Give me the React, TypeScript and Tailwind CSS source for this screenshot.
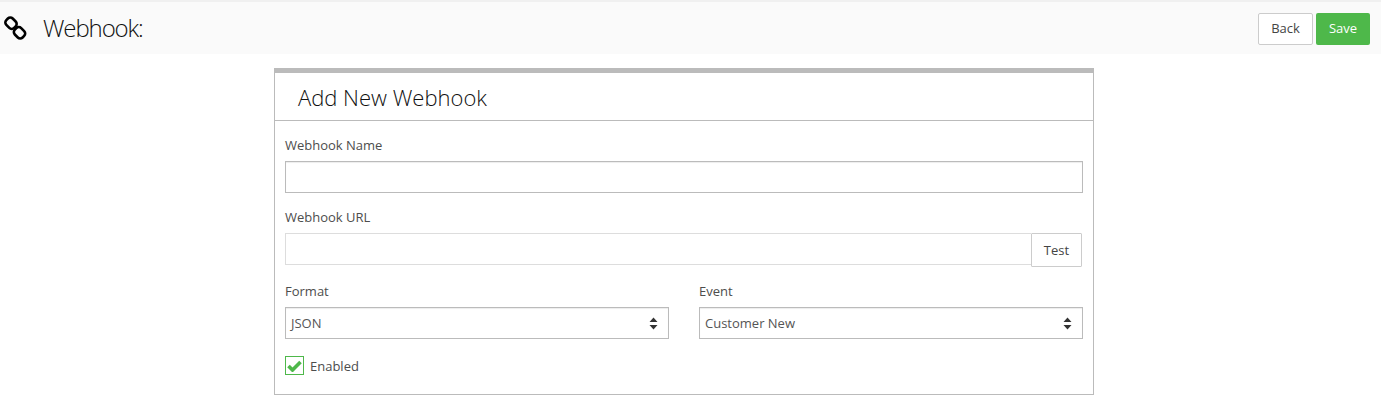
import React from "react";

function Link() {
  return (
    <svg width="24" height="24" viewBox="0 0 24 24" fill="none" className="ml-[3px] shrink-0">
      <g stroke="#000" strokeWidth="2.6">
        <rect x="3.5" y="1.7" width="9" height="11" rx="3.4" transform="rotate(-45 8 7.2)" />
        <rect x="12" y="11.3" width="9" height="11" rx="3.4" transform="rotate(-45 16.5 16.8)" />
      </g>
    </svg>
  );
}

function Arrows() {
  return (
    <svg width="9" height="13" viewBox="0 0 9 13" className="shrink-0">
      <path d="M4.5 0.5 L8.5 5 L0.5 5 Z M0.5 8 L8.5 8 L4.5 12.5 Z" fill="#333" />
    </svg>
  );
}

function Select({ value }: { value: string }) {
  return (
    <div className="flex h-8 items-center justify-between border border-[#bbbbbb] pl-[5px] pr-[10px] shadow-[inset_0_1px_1px_rgba(0,0,0,0.075)]">
      <span className="text-[13px] leading-[18px] text-[#555555]">{value}</span>
      <Arrows />
    </div>
  );
}

export default function App() {
  return (
    <div className="min-h-[413px] bg-white font-['Open_Sans',sans-serif] text-[13px] text-[#4d4d4d]">
      <header className="flex h-[54px] items-center justify-between border-t-2 border-[#f0f0f0] bg-[#fafafa] pr-[11px]">
        <div className="flex items-center">
          <Link />
          <h1 className="ml-[16px] text-[24px] font-light leading-[30px] tracking-[-1.1px] text-[#111111]">Webhook:</h1>
        </div>
        <div className="flex gap-[3px] pt-[1px]">
          <button className="h-[32px] w-[55px] rounded-[2px] border border-[#cccccc] bg-white text-[13px] text-[#444444]">Back</button>
          <button className="h-[32px] w-[54px] rounded-[2px] bg-[#4eb84a] text-[13px] text-white">Save</button>
        </div>
      </header>
      <main className="ml-[274px] mt-[14px] h-[327px] w-[820px] border border-t-[5px] border-[#bbbbbb]">
        <div className="flex h-[48px] items-center border-b border-[#bbbbbb] pl-[23px]">
          <h2 className="text-[22px] font-light leading-[28px] text-[#111111]">Add New Webhook</h2>
        </div>
        <form className="flex flex-col px-[10px]">
          <label className="mt-[15px] block leading-[18px]">Webhook Name</label>
          <div className="mt-[7px] h-8 border border-[#bbbbbb] shadow-[inset_0_1px_1px_rgba(0,0,0,0.075)]" />
          <label className="mt-[15px] block leading-[18px]">Webhook URL</label>
          <div className="mt-[7px] flex items-start pr-[1px]">
            <div className="h-8 flex-1 border border-r-0 border-[#dddddd]" />
            <button type="button" className="h-[34px] w-[51px] rounded-[1px] border border-[#cccccc] bg-white pt-[1px] text-[13px] text-[#444444]">Test</button>
          </div>
          <div className="mt-[15px] grid grid-cols-2 gap-x-[30px]">
            <div>
              <label className="block leading-[18px]">Format</label>
              <div className="mt-[7px]"><Select value="JSON" /></div>
            </div>
            <div>
              <label className="block leading-[18px]">Event</label>
              <div className="mt-[7px]"><Select value="Customer New" /></div>
            </div>
          </div>
          <div className="mt-[17px] flex items-center gap-[6px]">
            <span className="flex h-[19px] w-[19px] items-center justify-center border border-[#4eb84a]">
              <svg width="15" height="12" viewBox="0 0 15 12">
                <path d="M1.5 6 L5.5 10 L13.5 2" fill="none" stroke="#4eb84a" strokeWidth="3.6" />
              </svg>
            </span>
            <span className="leading-[18px]">Enabled</span>
          </div>
        </form>
      </main>
    </div>
  );
}
